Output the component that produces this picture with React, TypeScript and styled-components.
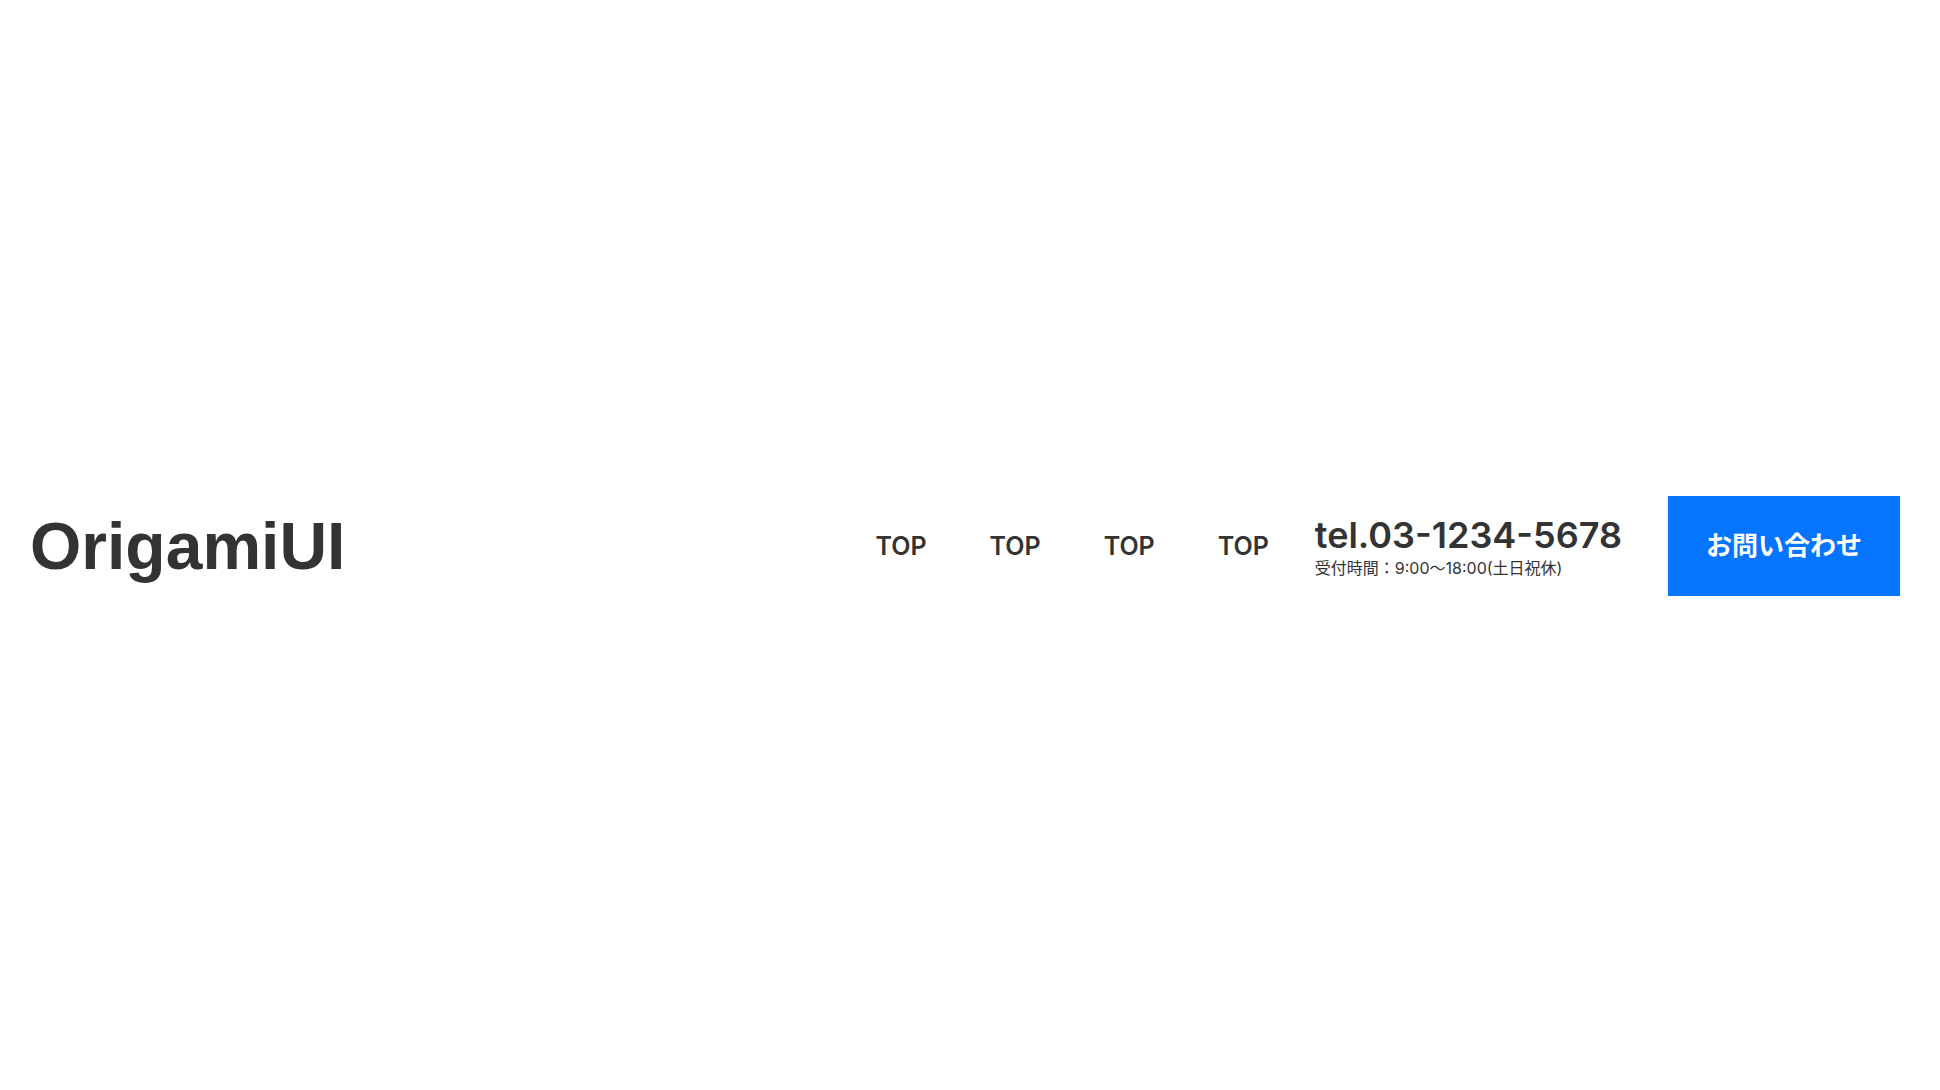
import styled, { createGlobalStyle } from "styled-components";

const GlobalStyle = createGlobalStyle`
  *, *::before, *::after { box-sizing: border-box; }
  body {
    margin: 0;
    background: #fff;
    color: #333;
    font-family: Inter, "Noto Sans CJK JP", sans-serif;
  }
`;

const Page = styled.main`
  display: flex;
  align-items: center;
  min-height: 100vh;
`;

const Header = styled.header`
  display: flex;
  align-items: center;
  justify-content: space-between;
  width: 100%;
  padding: 2px 40px 0 30px;
`;

const Logo = styled.a`
  color: inherit;
  font-family: "Liberation Sans", "Noto Sans CJK JP", sans-serif;
  font-size: 66px;
  font-weight: 700;
  line-height: 98px;
  text-decoration: none;
`;

const Side = styled.div`
  display: flex;
  align-items: center;
  gap: 46px;
`;

const NavList = styled.ul`
  display: flex;
  gap: 63px;
  margin: 0;
  padding: 0;
  list-style: none;
`;

const NavLink = styled.a`
  color: inherit;
  font-size: 25px;
  font-weight: 600;
  line-height: 32px;
  text-decoration: none;
`;

const Contact = styled.div`
  display: flex;
  flex-direction: column;
  padding-top: 2px;
`;

const Phone = styled.a`
  color: inherit;
  font-size: 36px;
  font-weight: 600;
  line-height: 42px;
  text-decoration: none;
`;

const Hours = styled.p`
  margin: 0;
  font-size: 16px;
  line-height: 24px;
`;

const ContactButton = styled.button`
  height: 100px;
  padding: 0 38px 6px;
  border: 0;
  background: #0575ff;
  color: #fff;
  font-family: inherit;
  font-size: 26px;
  font-weight: 700;
  cursor: pointer;
`;

const navItems = ["TOP", "TOP", "TOP", "TOP"];

export default function App() {
  return (
    <Page>
      <GlobalStyle />
      <Header>
        <Logo href="#">OrigamiUI</Logo>
        <Side>
          <nav>
            <NavList>
              {navItems.map((label, index) => (
                <li key={index}>
                  <NavLink href="#">{label}</NavLink>
                </li>
              ))}
            </NavList>
          </nav>
          <Contact>
            <Phone href="tel:03-1234-5678">tel.03-1234-5678</Phone>
            <Hours>受付時間：9:00〜18:00(土日祝休)</Hours>
          </Contact>
          <ContactButton type="button">お問い合わせ</ContactButton>
        </Side>
      </Header>
    </Page>
  );
}
